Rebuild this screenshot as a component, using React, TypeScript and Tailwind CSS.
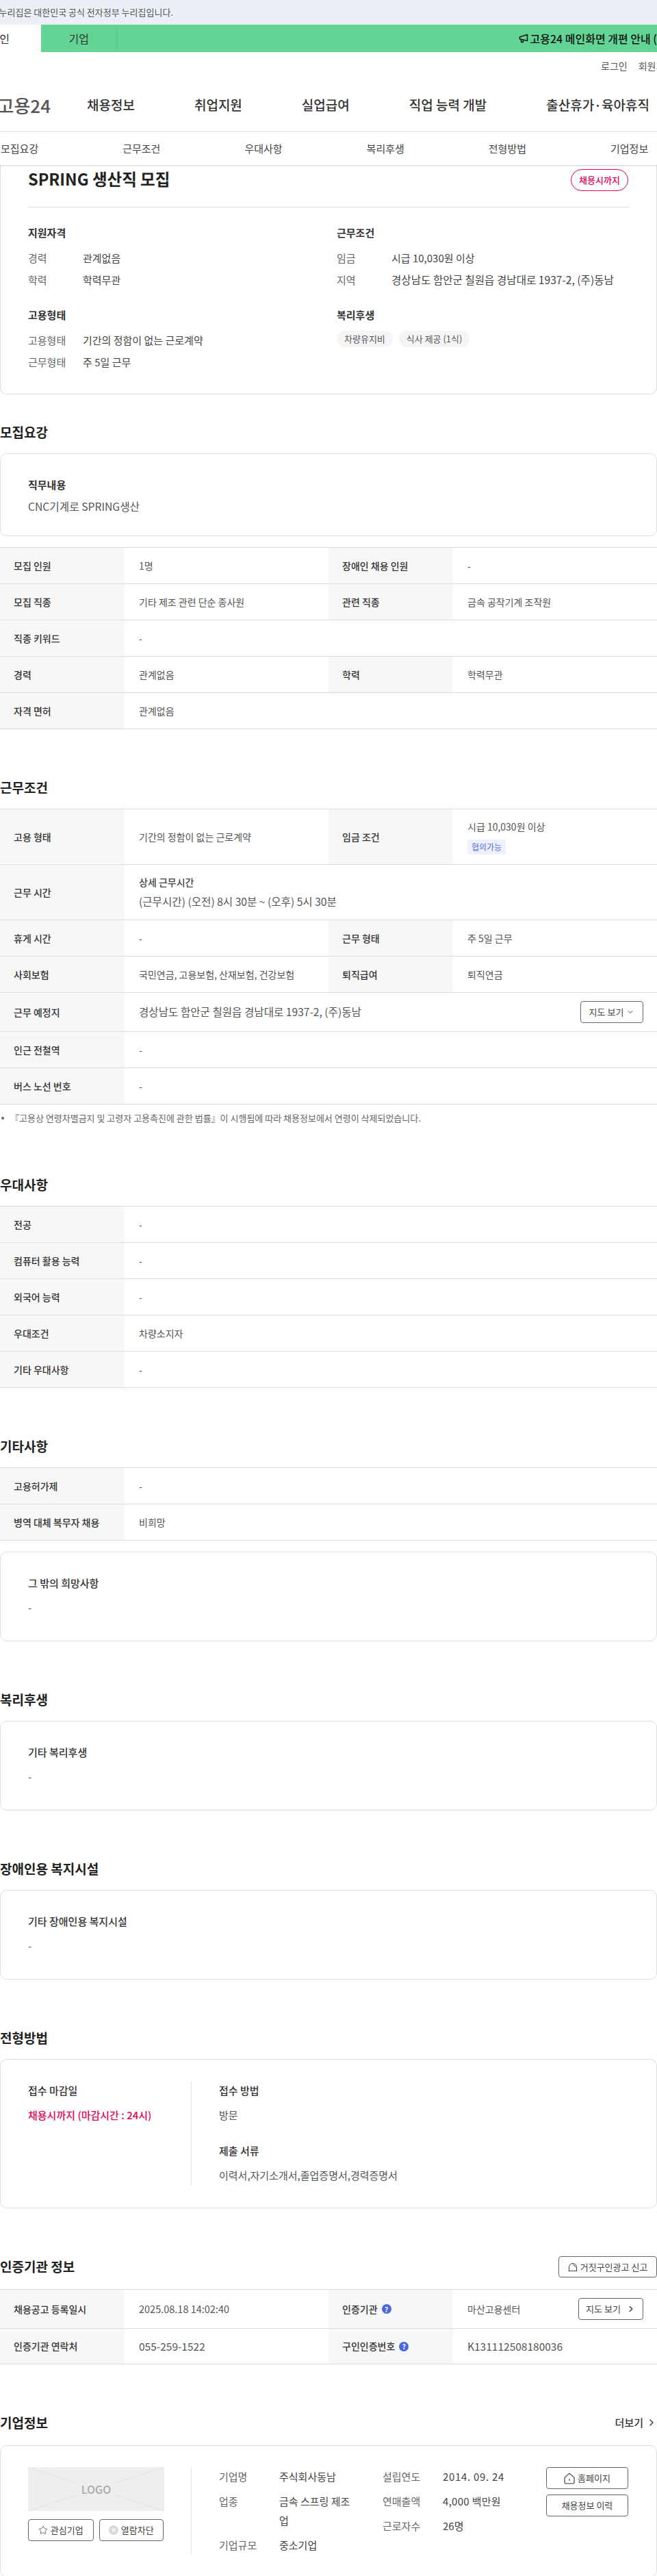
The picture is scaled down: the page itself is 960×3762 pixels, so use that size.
import { ChevronDown, ChevronRight, Star } from 'lucide-react'
import type { ReactNode } from 'react'

type Cell = { label: ReactNode; value: ReactNode }

const NAV = ['채용정보', '취업지원', '실업급여', '직업 능력 개발', '출산휴가·육아휴직']
const TABS = ['모집요강', '근무조건', '우대사항', '복리후생', '전형방법', '기업정보']

function Heading({ children, className = '' }: { children: ReactNode; className?: string }) {
  return <h2 className={`flex h-[30px] items-center text-[19px] font-semibold whitespace-nowrap text-[#222] ${className}`}>{children}</h2>
}

function Row({ cells, h = 'h-[53px]' }: { cells: Cell[]; h?: string }) {
  return (
    <div className={`flex border-b border-[#dddddd] ${h}`}>
      {cells.map((c, i) => (
        <div key={i} className={`flex ${cells.length === 1 ? 'flex-1' : 'w-[480px]'}`}>
          <div className="flex w-[182px] shrink-0 items-center gap-1.5 bg-[#f7f7f7] pl-5 font-medium text-[#333]">{c.label}</div>
          <div className="flex min-w-0 flex-1 items-center pl-[21px] text-[#555]">{c.value}</div>
        </div>
      ))}
    </div>
  )
}

function Table({ children }: { children: ReactNode }) {
  return <div className="mt-4 border-t border-[#dddddd] text-[14px]">{children}</div>
}

function TextCard({ title, value, bold, gap = 'mt-[4px]', pb = 'pb-[32px]', valueSize = '' }: { title: string; value: string; bold?: boolean; gap?: string; pb?: string; valueSize?: string }) {
  return (
    <div className={`mt-4 rounded-[10px] border border-[#dddddd] px-10 pt-[29px] text-[15px] ${pb}`}>
      <div className={`flex h-8 items-center text-[#333] ${bold ? 'font-bold' : 'font-medium'}`}>{title}</div>
      <div className={`flex h-8 items-center text-[#555] ${gap} ${valueSize}`}>{value}</div>
    </div>
  )
}

function Info({ label, value, wide }: { label: string; value: string; wide?: boolean }) {
  return (
    <div className="flex h-8 items-center">
      <span className="w-[80px] shrink-0 text-[#666]">{label}</span>
      <span className={`whitespace-nowrap text-[#444] ${wide ? 'text-[15.6px]' : ''}`}>{value}</span>
    </div>
  )
}

function Help() {
  return <span className="flex h-[14px] w-[14px] items-center justify-center rounded-full bg-[#4a67e0] text-[10px] font-bold text-white">?</span>
}

function OutlineButton({ children, className = '' }: { children: ReactNode; className?: string }) {
  return <button className={`flex items-center justify-center rounded-[4px] border border-[#666] text-[13px] text-[#444] ${className}`}>{children}</button>
}

function HomeIcon() {
  return (
    <svg width="16" height="17" viewBox="0 0 16 17" fill="none" stroke="#333" strokeWidth="1.1">
      <path d="M1 7.2 8 1.2l7 6v7.4a1.4 1.4 0 0 1-1.4 1.4H2.4A1.4 1.4 0 0 1 1 14.6Z" strokeLinejoin="round" />
      <path d="M8 9.5v2.2" strokeLinecap="round" />
    </svg>
  )
}

export default function App() {
  return (
    <div className="h-[3762px] w-[960px] overflow-hidden bg-white font-['Noto_Sans_CJK_KR',sans-serif]">
      {/* top strip */}
      <div className="h-9 bg-[#eceff5]">
        <div className="flex h-9 w-[253px] items-center justify-end text-[13px] whitespace-nowrap text-[#555]">
          <span className="shrink-0">이 누리집은 대한민국 공식 전자정부 누리집입니다.</span>
        </div>
      </div>

      {/* notice bar */}
      <div className="flex h-10 bg-[#62d594]">
        <div className="flex w-[60px] items-center justify-end bg-white pr-[46px] text-[16px] whitespace-nowrap text-[#333]">
          <span className="shrink-0">개인</span>
        </div>
        <div className="flex w-[119px] items-center justify-center border-r border-[#58c888] text-[16px] text-[#333]">기업</div>
        <div className="ml-[587px] flex items-center gap-[2px] text-[16px] font-medium whitespace-nowrap text-[#111]">
          <svg width="14" height="14" viewBox="0 0 14 14" fill="none" stroke="#111" strokeWidth="1.5" className="shrink-0" strokeLinejoin="round">
            <path d="M1.5 5 12.5 1.5V10.5L1.5 8Z" />
            <path d="M3.5 8.5V12.5H6.5V9.5" />
          </svg>
          <span className="shrink-0">고용24 메인화면 개편 안내 (</span>
        </div>
      </div>

      <div className="flex h-10 items-center gap-4 pl-[878px] text-[14px] whitespace-nowrap text-[#555]">
        <span>로그인</span>
        <span>회원가입</span>
      </div>

      {/* main nav */}
      <div className="flex h-[77px] items-center border-b-2 border-[#eeeeee]">
        <div className="flex w-[74px] shrink-0 justify-end text-[26px] font-medium whitespace-nowrap text-[#555]">
          <span className="shrink-0">고용24</span>
        </div>
        <div className="ml-[53px] flex gap-[87px] text-[19px] font-medium whitespace-nowrap text-[#333]">
          {NAV.map((n) => (
            <span key={n}>{n}</span>
          ))}
        </div>
      </div>
      <div className="relative z-10 flex h-12 items-center gap-[123px] bg-white pl-px text-[15px] whitespace-nowrap text-[#444] shadow-[0_1px_2px_rgba(0,0,0,0.2)]">
        {TABS.map((t) => (
          <span key={t}>{t}</span>
        ))}
      </div>

      {/* summary card */}
      <div className="rounded-b-[10px] border-x border-b border-[#dddddd] px-10 pb-[30px] text-[15px]">
        <div className="flex h-[62px] items-start justify-between border-b border-[#dddddd] pt-1.5">
          <h1 className="flex h-[30px] items-center text-[23.5px] font-bold whitespace-nowrap text-[#222]">SPRING 생산직 모집</h1>
          <span className="mr-px flex h-8 w-[84px] items-center justify-center rounded-full border border-[#e6005a] text-[13px] font-medium text-[#e6005a]">채용시까지</span>
        </div>
        <div className="mt-[21px] flex">
          <div className="w-[451px]">
            <div className="flex h-8 items-center font-bold text-[#333]">지원자격</div>
            <div className="mt-[5px]">
              <Info label="경력" value="관계없음" />
              <Info label="학력" value="학력무관" />
            </div>
            <div className="mt-[19px] flex h-8 items-center font-bold text-[#333]">고용형태</div>
            <div className="mt-[5px]">
              <Info label="고용형태" value="기간의 정함이 없는 근로계약" />
              <Info label="근무형태" value="주 5일 근무" />
            </div>
          </div>
          <div className="flex-1">
            <div className="flex h-8 items-center font-bold text-[#333]">근무조건</div>
            <div className="mt-[5px]">
              <Info label="임금" value="시급 10,030원 이상" />
              <Info label="지역" value="경상남도 함안군 칠원읍 경남대로 1937-2, (주)동남" wide />
            </div>
            <div className="mt-[19px] flex h-8 items-center font-bold text-[#333]">복리후생</div>
            <div className="mt-[7px] flex gap-[9px] text-[13px] text-[#555]">
              <span className="flex h-6 items-center rounded-full bg-[#f5f5f5] px-[11px]">차량유지비</span>
              <span className="flex h-6 items-center rounded-full bg-[#f5f5f5] px-[11px]">식사 제공 (1식)</span>
            </div>
          </div>
        </div>
      </div>

      <Heading className="mt-10">모집요강</Heading>
      <TextCard title="직무내용" value="CNC기계로 SPRING생산" bold gap="mt-0" pb="pb-[26px]" valueSize="text-[15.7px]" />
      <Table>
        <Row cells={[{ label: '모집 인원', value: '1명' }, { label: '장애인 채용 인원', value: '-' }]} />
        <Row cells={[{ label: '모집 직종', value: '기타 제조 관련 단순 종사원' }, { label: '관련 직종', value: '금속 공작기계 조작원' }]} />
        <Row cells={[{ label: '직종 키워드', value: '-' }]} />
        <Row cells={[{ label: '경력', value: '관계없음' }, { label: '학력', value: '학력무관' }]} />
        <Row cells={[{ label: '자격 면허', value: '관계없음' }]} />
      </Table>

      <Heading className="mt-[70px]">근무조건</Heading>
      <Table>
        <Row
          h="h-[81px]"
          cells={[
            { label: '고용 형태', value: '기간의 정함이 없는 근로계약' },
            {
              label: '임금 조건',
              value: (
                <div className="flex flex-col items-start gap-2">
                  <span>시급 10,030원 이상</span>
                  <span className="flex h-[22px] w-14 items-center justify-center rounded-[3px] bg-[#eef1fd] text-[12px] text-[#4f6ae0]">협의가능</span>
                </div>
              ),
            },
          ]}
        />
        <Row
          h="h-[81px]"
          cells={[
            {
              label: '근무 시간',
              value: (
                <div className="flex flex-col gap-1.5">
                  <span className="font-medium text-[#444]">상세 근무시간</span>
                  <span className="text-[15.6px]">(근무시간) (오전) 8시 30분 ~ (오후) 5시 30분</span>
                </div>
              ),
            },
          ]}
        />
        <Row cells={[{ label: '휴게 시간', value: '-' }, { label: '근무 형태', value: '주 5일 근무' }]} />
        <Row cells={[{ label: '사회보험', value: '국민연금, 고용보험, 산재보험, 건강보험' }, { label: '퇴직급여', value: '퇴직연금' }]} />
        <Row
          h="h-[57px]"
          cells={[
            {
              label: '근무 예정지',
              value: (
                <div className="flex flex-1 items-center justify-between pr-5">
                  <span className="text-[15.6px]">경상남도 함안군 칠원읍 경남대로 1937-2, (주)동남</span>
                  <OutlineButton className="h-8 w-[92px] gap-1">
                    지도 보기 <ChevronDown className="h-3 w-3" />
                  </OutlineButton>
                </div>
              ),
            },
          ]}
        />
        <Row cells={[{ label: '인근 전철역', value: '-' }]} />
        <Row cells={[{ label: '버스 노선 번호', value: '-' }]} />
      </Table>
      <p className="mt-2.5 flex h-5 items-center text-[13px] whitespace-nowrap text-[#666]">
        <span className="mr-[9px] ml-0.5 h-1 w-1 rounded-full bg-[#666]" />
        『고용상 연령차별금지 및 고령자 고용촉진에 관한 법률』이 시행됨에 따라 채용정보에서 연령이 삭제되었습니다.
      </p>

      <Heading className="mt-[72px]">우대사항</Heading>
      <Table>
        <Row cells={[{ label: '전공', value: '-' }]} />
        <Row cells={[{ label: '컴퓨터 활용 능력', value: '-' }]} />
        <Row cells={[{ label: '외국어 능력', value: '-' }]} />
        <Row cells={[{ label: '우대조건', value: '차량소지자' }]} />
        <Row cells={[{ label: '기타 우대사항', value: '-' }]} />
      </Table>

      <Heading className="mt-[70px]">기타사항</Heading>
      <Table>
        <Row cells={[{ label: '고용허가제', value: '-' }]} />
        <Row cells={[{ label: '병역 대체 복무자 채용', value: '비희망' }]} />
      </Table>
      <TextCard title="그 밖의 희망사항" value="-" />

      <Heading className="mt-[70px]">복리후생</Heading>
      <TextCard title="기타 복리후생" value="-" />

      <Heading className="mt-[70px]">장애인용 복지시설</Heading>
      <TextCard title="기타 장애인용 복지시설" value="-" />

      <Heading className="mt-[70px]">전형방법</Heading>
      <div className="mt-4 flex h-[218px] rounded-[10px] border border-[#dddddd] px-10 pt-8 text-[15px]">
        <div className="h-[152px] w-[239px] border-r border-[#e5e5e5]">
          <div className="flex h-[26px] items-center font-medium text-[#333]">접수 마감일</div>
          <div className="mt-2.5 flex h-[26px] items-center font-medium text-[#e6005a]">채용시까지 (마감시간 : 24시)</div>
        </div>
        <div className="pl-10">
          <div className="flex h-[26px] items-center font-medium text-[#333]">접수 방법</div>
          <div className="mt-2.5 flex h-[26px] items-center text-[#555]">방문</div>
          <div className="mt-[26px] flex h-[26px] items-center font-medium text-[#333]">제출 서류</div>
          <div className="mt-2.5 flex h-[26px] items-center text-[#555]">이력서,자기소개서,졸업증명서,경력증명서</div>
        </div>
      </div>

      <div className="mt-[70px] flex items-center justify-between">
        <Heading>인증기관 정보</Heading>
        <OutlineButton className="h-[31px] w-[144px] gap-1">
          <svg width="14" height="14" viewBox="0 0 14 14" fill="none" stroke="#444" strokeWidth="1">
            <path d="M1.5 12.5V7a5.5 5.5 0 0 1 11 0v5.5M0.5 12.5h13M7 3.5A3.5 3.5 0 0 1 10.5 7" strokeLinejoin="round" />
          </svg>
          거짓구인광고 신고
        </OutlineButton>
      </div>
      <div className="mt-[17px] border-t border-[#dddddd] text-[14px]">
        <Row
          h="h-[57px]"
          cells={[
            { label: '채용공고 등록일시', value: <span className="text-[14.5px]">2025.08.18 14:02:40</span> },
            {
              label: (
                <>
                  인증기관 <Help />
                </>
              ),
              value: (
                <div className="flex flex-1 items-center justify-between pr-5">
                  <span>마산고용센터</span>
                  <OutlineButton className="h-8 w-[95px] gap-2">
                    지도 보기 <ChevronRight className="h-[14px] w-[14px]" strokeWidth={2.6} />
                  </OutlineButton>
                </div>
              ),
            },
          ]}
        />
        <Row
          h="h-[52px]"
          cells={[
            { label: '인증기관 연락처', value: <span className="text-[15.5px]">055-259-1522</span> },
            {
              label: (
                <>
                  구인인증번호 <Help />
                </>
              ),
              value: <span className="text-[15.5px]">K131112508180036</span>,
            },
          ]}
        />
      </div>

      <div className="mt-[70px] flex items-center justify-between">
        <Heading>기업정보</Heading>
        <span className="flex items-center gap-1 text-[15px] font-medium text-[#333]">
          더보기 <ChevronRight className="h-4 w-4" />
        </span>
      </div>
      <div className="mt-[18px] flex h-[193px] rounded-[10px] border border-[#dddddd] px-10 pt-[31px] text-[15px]">
        <div className="h-[128px] w-[239px] border-r border-[#e5e5e5] pr-10">
          <div className="relative flex h-16 w-[199px] items-center justify-center bg-[#eeeeee]">
            <svg className="absolute inset-0 h-full w-full" viewBox="0 0 199 64" preserveAspectRatio="none" stroke="#e2e2e2" fill="none">
              <path d="M0 0 199 64M199 0 0 64" />
            </svg>
            <span className="relative bg-[#eeeeee] px-[6px] text-[16px] font-medium text-[#aaaaaa]">LOGO</span>
          </div>
          <div className="mt-3 flex gap-2">
            <OutlineButton className="h-8 w-[96px] gap-1">
              <Star className="h-[14px] w-[14px]" strokeWidth={1.3} /> 관심기업
            </OutlineButton>
            <OutlineButton className="h-8 w-[95px] gap-1">
              <svg width="14" height="14" viewBox="0 0 14 14">
                <circle cx="7" cy="7" r="7" fill="#d9d9d9" />
                <path d="M4.5 4.5l5 5M9.5 4.5l-5 5" stroke="#fff" strokeWidth="1.3" />
              </svg>
              열람차단
            </OutlineButton>
          </div>
        </div>
        <div className="flex pl-10 leading-[28px]">
          <div className="flex w-[239px] flex-col gap-2">
            <div className="flex">
              <span className="w-[88px] shrink-0 text-[#666]">기업명</span>
              <span className="text-[#444]">주식회사동남</span>
            </div>
            <div className="flex">
              <span className="w-[88px] shrink-0 text-[#666]">업종</span>
              <span className="w-[111px] text-[#444]">금속 스프링 제조업</span>
            </div>
            <div className="flex">
              <span className="w-[88px] shrink-0 text-[#666]">기업규모</span>
              <span className="text-[#444]">중소기업</span>
            </div>
          </div>
          <div className="flex w-[239px] flex-col gap-2">
            <div className="flex">
              <span className="w-[88px] shrink-0 text-[#666]">설립연도</span>
              <span className="tracking-[0.7px] text-[#444]">2014. 09. 24</span>
            </div>
            <div className="flex">
              <span className="w-[88px] shrink-0 text-[#666]">연매출액</span>
              <span className="tracking-[0.3px] text-[#444]">4,000 백만원</span>
            </div>
            <div className="flex">
              <span className="w-[88px] shrink-0 text-[#666]">근로자수</span>
              <span className="text-[#444]">26명</span>
            </div>
          </div>
          <div className="flex w-[120px] flex-col gap-2">
            <OutlineButton className="h-8 gap-1">
              <HomeIcon /> 홈페이지
            </OutlineButton>
            <OutlineButton className="h-8">채용정보 이력</OutlineButton>
          </div>
        </div>
      </div>
    </div>
  )
}
